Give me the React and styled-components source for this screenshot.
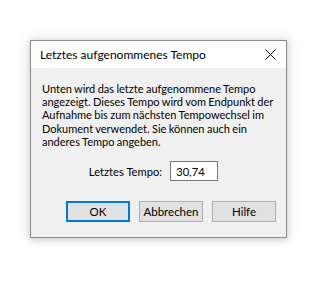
import React from 'react';
import styled, {createGlobalStyle} from 'styled-components';

const GlobalStyle = createGlobalStyle`
    html, body {
        margin: 0;
        padding: 0;
        background: #ffffff;
    }
    body {
        font-family: Lato, "Noto Sans", sans-serif;
        font-size: 11.2px;
        color: #000;
    }
`

const Page = styled.div`
    width: 316px;
    height: 285px;
    padding: 40px 0 0 30px;
    box-sizing: border-box;
`

const Dialog = styled.div`
    width: 257px;
    height: 198px;
    box-sizing: border-box;
    border: 1px solid #8a8a8a;
    background: #f0f0f0;
    display: flex;
    flex-direction: column;
    box-shadow: 0 0 10px 2px rgba(0,0,0,0.12), 0 2px 6px rgba(0,0,0,0.10);
`

const TitleBar = styled.header`
    height: 27px;
    flex-shrink: 0;
    background: #ffffff;
    display: flex;
    align-items: center;
    justify-content: space-between;
    padding: 0 10px 0 9px;
`

const Title = styled.span`
    font-size: 12px;
    color: #000;
    padding-bottom: 1px;
    white-space: nowrap;
`

const CloseIcon = styled.svg`
    width: 11px;
    height: 11px;
`

const Body = styled.div`
    flex: 1;
    display: flex;
    flex-direction: column;
    padding: 14px 10px 0 11px;
`

const Message = styled.p`
    margin: 0;
    font-size: 11px;
    word-spacing: -0.4px;
    line-height: 13.2px;
    white-space: nowrap;
    color: #000;
`

const FieldRow = styled.div`
    display: flex;
    justify-content: center;
    align-items: center;
    gap: 8px;
    margin-top: 13px;
    padding-right: 11px;
`

const Label = styled.label`
    white-space: nowrap;
`

const Input = styled.div`
    width: 48px;
    height: 20px;
    box-sizing: border-box;
    border: 1px solid #7a7a7a;
    background: #fff;
    padding-left: 5px;
    display: flex;
    align-items: center;
`

const ButtonRow = styled.div`
    display: flex;
    justify-content: flex-end;
    gap: 9px;
    margin-top: 20px;
`

const Button = styled.button`
    width: 64px;
    height: 21px;
    box-sizing: border-box;
    background: #e1e1e1;
    border: ${({primary}) => primary ? '2px solid #0078d7' : '1px solid #adadad'};
    font-family: Lato, "Noto Sans", sans-serif;
    font-size: 11.5px;
    color: #000;
    padding: 0;
    display: flex;
    align-items: center;
    justify-content: center;
`

const App = () => (
    <Page>
        <GlobalStyle />
        <Dialog>
            <TitleBar>
                <Title>Letztes aufgenommenes Tempo</Title>
                <CloseIcon viewBox="0 0 11 11">
                    <path d="M0.5 0.5 L10.5 10.5 M10.5 0.5 L0.5 10.5" stroke="#000" strokeWidth="1" fill="none" />
                </CloseIcon>
            </TitleBar>
            <Body>
                <Message>
                    Unten wird das letzte aufgenommene Tempo<br />
                    angezeigt. Dieses Tempo wird vom Endpunkt der<br />
                    Aufnahme bis zum nächsten Tempowechsel im<br />
                    Dokument verwendet. Sie können auch ein<br />
                    anderes Tempo angeben.
                </Message>
                <FieldRow>
                    <Label>Letztes Tempo:</Label>
                    <Input>30,74</Input>
                </FieldRow>
                <ButtonRow>
                    <Button primary>OK</Button>
                    <Button>Abbrechen</Button>
                    <Button>Hilfe</Button>
                </ButtonRow>
            </Body>
        </Dialog>
    </Page>
)

export default App
